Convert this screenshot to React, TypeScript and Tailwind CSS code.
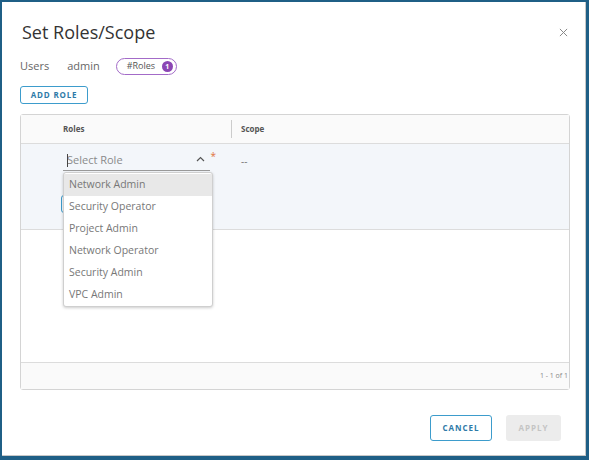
import React from "react";

const roles = [
  "Network Admin",
  "Security Operator",
  "Project Admin",
  "Network Operator",
  "Security Admin",
  "VPC Admin",
];

export default function App() {
  return (
    <div className="w-[589px] h-[460px] bg-[#1f5f86] pt-[2px] pl-[2px] pr-[3px] pb-[4px] flex font-['Open_Sans',sans-serif]">
      <div className="flex-1 bg-white flex flex-col pl-[18px] pr-[16px] shadow-[inset_-1px_-1px_0_#c8c8c8]">
        {/* header */}
        <div className="pt-[18px] h-[42px] flex items-start justify-between">
          <div className="pl-[2px] h-[24px] leading-[24px] text-[18px] text-[#333]">Set Roles/Scope</div>
          <div className="h-[24px] flex items-center pr-[2px]">
            <svg width="9" height="9" viewBox="0 0 10 10">
              <path d="M1 1 L9 9 M9 1 L1 9" stroke="#888" strokeWidth="1.1" />
            </svg>
          </div>
        </div>
        {/* users row */}
        <div className="mt-[13px] h-[18px] flex items-center text-[11px] text-[#666]">
          <span>Users</span>
          <span className="ml-[18px]">admin</span>
          <div className="ml-[16px] h-[17px] w-[61px] rounded-full border border-[#a36bc8] flex items-center pl-[10px] pr-[3px] justify-between">
            <span className="text-[9px] text-[#555]">#Roles</span>
            <span className="w-[11px] h-[11px] rounded-full bg-[#8b46b4] text-white text-[7px] leading-[11px] text-center font-bold">1</span>
          </div>
        </div>
        {/* add role */}
        <div className="mt-[11px] flex">
          <button className="h-[18px] w-[68px] rounded-[3px] border border-[#3d9ccc] text-[8px] font-bold tracking-[0.8px] text-[#2e7aa8] flex items-center justify-center">
            ADD ROLE
          </button>
        </div>
        {/* table */}
        <div className="mt-[10px] h-[276px] border border-[#d4d4d4] rounded-[3px] flex flex-col">
          <div className="h-[29px] bg-[#fafafa] border-b border-[#dcdcdc] flex items-center text-[8px] font-bold text-[#555]">
            <div className="w-[210px] pl-[42px] h-full flex items-center">Roles</div>
            <div className="w-px h-[18px] bg-[#ccc]" />
            <div className="pl-[9px]">Scope</div>
          </div>
          <div className="h-[86px] bg-[#f3f6fa] border-b border-[#dcdcdc] flex items-start">
            <div className="w-[211px] pl-[42px] pt-[6px] relative">
              <div className="relative w-[147px] h-[21px] border-b border-[#9a9a9a] flex items-center">
                <span className="absolute left-[4px] top-[4px] w-px h-[13px] bg-[#444]" />
                <span className="pl-[4px] text-[11px] text-[#8a8a8a]">Select Role</span>
                <svg className="absolute right-[5px] top-[6px]" width="9" height="6" viewBox="0 0 9 6">
                  <path d="M1 5 L4.5 1.5 L8 5" fill="none" stroke="#555" strokeWidth="1.2" />
                </svg>
                <span className="absolute right-[-6px] top-[1px] text-[10px] text-[#e0743c] leading-none">*</span>
              </div>
              <div className="mt-[24px] ml-[-2px] w-[60px] h-[18px] rounded-[3px] border border-[#3d9ccc]" />
              {/* dropdown */}
              <div className="absolute left-[42px] top-[28px] w-[150px] bg-white border border-[#cfcfcf] rounded-[3px] shadow-[0_1px_3px_rgba(0,0,0,0.2)] pt-[1px] z-10">
                {roles.map((r, i) => (
                  <div
                    key={r}
                    className={
                      "h-[22px] flex items-center pl-[5px] text-[10.5px] text-[#777] " +
                      (i === 0 ? "bg-[#e8e8e8]" : "")
                    }
                  >
                    {r}
                  </div>
                ))}
              </div>
            </div>
            <div className="pl-[9px] pt-[10px] text-[10px] text-[#777]">--</div>
          </div>
          <div className="flex-1" />
          <div className="h-[27px] bg-[#fafafa] border-t border-[#dcdcdc] flex items-center justify-end pr-[1px] text-[7px] text-[#888]">
            1 - 1 of 1
          </div>
        </div>
        {/* footer */}
        <div className="mt-[25px] flex justify-end pr-[9px] gap-[14px]">
          <button className="h-[26px] w-[62px] rounded-[3px] border-[1.5px] border-[#3d9ccc] text-[8px] font-bold tracking-[1px] text-[#2e7aa8] flex items-center justify-center">
            CANCEL
          </button>
          <button className="h-[26px] w-[55px] rounded-[3px] bg-[#ececec] text-[8px] font-bold tracking-[1px] text-[#c4c4c4] flex items-center justify-center">
            APPLY
          </button>
        </div>
      </div>
    </div>
  );
}
